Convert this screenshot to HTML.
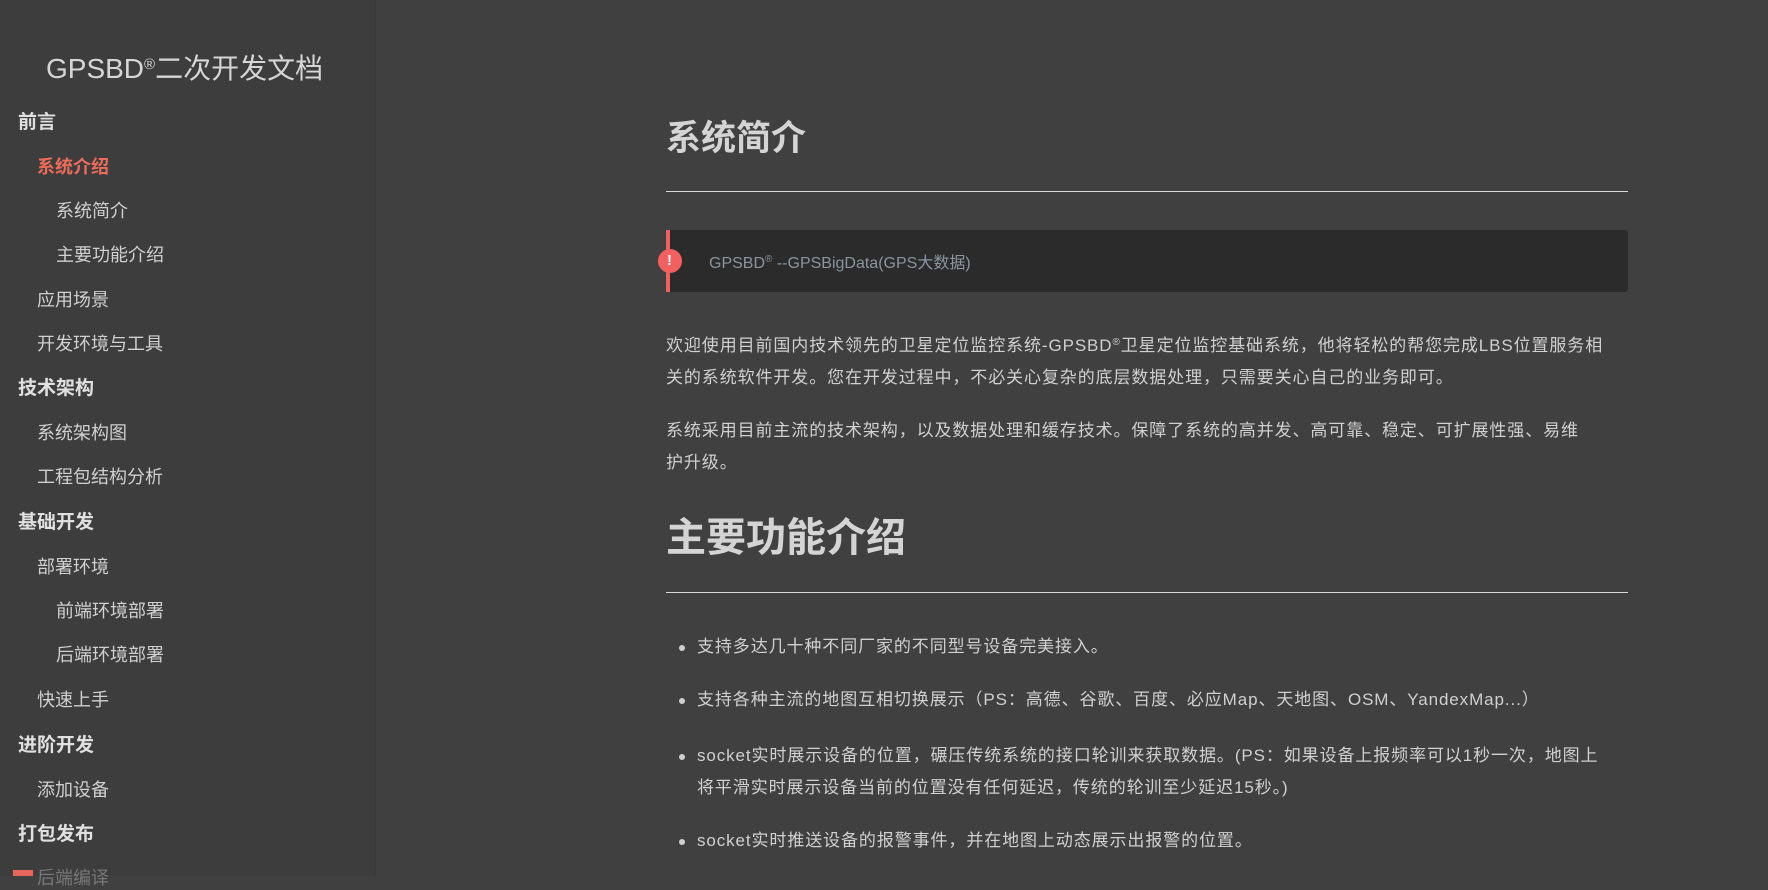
<!DOCTYPE html>
<html><head><meta charset="utf-8"><style>
html,body{margin:0;padding:0;width:1768px;height:876px;overflow:hidden;background:#404040;font-family:"Liberation Sans","Noto Sans CJK SC",sans-serif;color:#d0d0d0}
.side{position:absolute;left:0;top:0;width:375px;height:876px;background:#3d3d3d;border-right:1px solid #393939}
.title{position:absolute;left:46px;top:47px;font-size:28px;color:#d6d6d6;white-space:nowrap}
.title sup{font-size:15px;vertical-align:9px}
.n{position:absolute;font-size:18px;color:#d0d0d0;white-space:nowrap;line-height:24px}
.b{font-weight:bold;left:18px;font-size:19px;color:#e0e0e0}
.l2{left:37px}.l3{left:56px}
.act{color:#ef6b5a;font-weight:bold}
.main{position:absolute;left:666px;width:962px;top:0;letter-spacing:0.9px}
.a{position:absolute;left:0;white-space:nowrap}
h1,h2{margin:0;font-weight:bold;color:#d4d4d4;letter-spacing:0}
.hr{position:absolute;left:0;width:962px;height:1px;background:#d8d8d8}
.p{font-size:17px;line-height:32px;color:#d0d0d0}
.bq{position:absolute;left:0;top:230px;width:962px;height:62px;background:#2b2b2b;border-left:4px solid #f3605f;box-sizing:border-box;border-radius:0 3px 3px 0}
.ic{position:absolute;left:-12px;top:19px;width:24px;height:24px;border-radius:50%;background:#f3605f;color:#fff;font-size:15px;font-weight:bold;text-align:center;line-height:24px}
li{position:absolute;left:31px;font-size:17px;line-height:32px;white-space:nowrap;list-style:none}
li:before{content:"";position:absolute;left:-18px;top:14px;width:6px;height:6px;border-radius:50%;background:#cfcfcf}
sup.r{font-size:10px;vertical-align:6px}
</style></head><body>
<div class="side">
<div class="title">GPSBD<sup>®</sup>二次开发文档</div>
<div class="n b" style="top:111px">前言</div>
<div class="n l2 act" style="top:155px">系统介绍</div>
<div class="n l3" style="top:199px">系统简介</div>
<div class="n l3" style="top:243px">主要功能介绍</div>
<div class="n l2" style="top:288px">应用场景</div>
<div class="n l2" style="top:332px">开发环境与工具</div>
<div class="n b" style="top:377px">技术架构</div>
<div class="n l2" style="top:421px">系统架构图</div>
<div class="n l2" style="top:465px">工程包结构分析</div>
<div class="n b" style="top:511px">基础开发</div>
<div class="n l2" style="top:555px">部署环境</div>
<div class="n l3" style="top:599px">前端环境部署</div>
<div class="n l3" style="top:643px">后端环境部署</div>
<div class="n l2" style="top:688px">快速上手</div>
<div class="n b" style="top:734px">进阶开发</div>
<div class="n l2" style="top:778px">添加设备</div>
<div class="n b" style="top:823px">打包发布</div>
<div style="position:absolute;left:13px;top:870px;width:20px;height:6px;background:#e8675a"></div>
<div class="n" style="left:37px;top:866px;color:#777">后端编译</div>
</div>
<div class="main">
<h1 class="a" style="top:110px;font-size:35px">系统简介</h1>
<div class="hr" style="top:191px"></div>
<div class="bq"><div class="ic">!</div><div style="position:absolute;left:39px;top:19px;font-size:16px;color:#8a95a0;white-space:nowrap;letter-spacing:0">GPSBD<sup class="r">®</sup> --GPSBigData(GPS大数据)</div></div>
<div class="a p" style="top:327px">欢迎使用目前国内技术领先的卫星定位监控系统-GPSBD<sup class="r">®</sup>卫星定位监控基础系统，他将轻松的帮您完成LBS位置服务相<br>关的系统软件开发。您在开发过程中，不必关心复杂的底层数据处理，只需要关心自己的业务即可。</div>
<div class="a p" style="top:415px">系统采用目前主流的技术架构，以及数据处理和缓存技术。保障了系统的高并发、高可靠、稳定、可扩展性强、易维<br>护升级。</div>
<h2 class="a" style="top:505px;font-size:40px">主要功能介绍</h2>
<div class="hr" style="top:592px"></div>
<ul style="margin:0;padding:0">
<li style="top:631px">支持多达几十种不同厂家的不同型号设备完美接入。</li>
<li style="top:684px">支持各种主流的地图互相切换展示（PS：高德、谷歌、百度、必应Map、天地图、OSM、YandexMap...）</li>
<li style="top:740px">socket实时展示设备的位置，碾压传统系统的接口轮训来获取数据。(PS：如果设备上报频率可以1秒一次，地图上<br>将平滑实时展示设备当前的位置没有任何延迟，传统的轮训至少延迟15秒。)</li>
<li style="top:825px">socket实时推送设备的报警事件，并在地图上动态展示出报警的位置。</li>
</ul>
</div>
</body></html>
